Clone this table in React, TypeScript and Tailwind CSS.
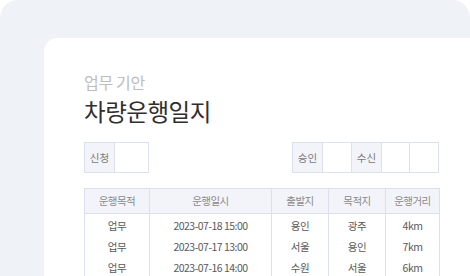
const rows = [
  { purpose: '업무', date: '2023-07-18 15:00', from: '용인', to: '광주', dist: '4km' },
  { purpose: '업무', date: '2023-07-17 13:00', from: '서울', to: '용인', dist: '7km' },
  { purpose: '업무', date: '2023-07-16 14:00', from: '수원', to: '서울', dist: '6km' },
];

function LabelCell({ label }: { label: string }) {
  return (
    <div className="w-[30px] h-full flex items-center justify-center bg-[#f3f4f9] border-r border-[#dcdfee] text-[10.5px] text-[#7a7a7a]">
      {label}
    </div>
  );
}

function App() {
  return (
    <div
      className="w-[470px] h-[276px] overflow-hidden bg-white"
      style={{ fontFamily: '"Noto Sans CJK KR", "Noto Sans", sans-serif' }}
    >
      <div className="h-full rounded-t-[18px] bg-[#eff2f7] pt-[38px] pl-[44px]">
        <div className="h-full w-[460px] rounded-tl-[14px] bg-white pl-[40px] pt-[33px]">
          <div className="text-[16px] leading-[22px] text-[#bdbdbd] tracking-[-0.02em]">업무 기안</div>
          <div className="mt-[3px] text-[23.5px] leading-[30px] text-[#2f2f2f] tracking-[-0.02em]">차량운행일지</div>

          <div className="mt-[16px] flex w-[355px] justify-between">
            <div className="flex h-[31px] border border-[#dcdfee]">
              <LabelCell label="신청" />
              <div className="w-[33px]" />
            </div>
            <div className="flex h-[31px] border border-[#dcdfee]">
              <LabelCell label="승인" />
              <div className="w-[29px] border-r border-[#dcdfee]" />
              <LabelCell label="수신" />
              <div className="w-[28px] border-r border-[#dcdfee]" />
              <div className="w-[28px]" />
            </div>
          </div>

          <table className="mt-[15px] w-[355px] table-fixed border-collapse text-[10.5px] tracking-[-0.05em]">
            <colgroup>
              <col className="w-[65px]" />
              <col className="w-[122px]" />
              <col className="w-[57px]" />
              <col className="w-[57px]" />
              <col className="w-[54px]" />
            </colgroup>
            <thead>
              <tr className="h-[25px] bg-[#f3f4f9] text-[#8a8a8a]">
                {['운행목적', '운행일시', '출발지', '목적지', '운행거리'].map((h) => (
                  <th key={h} className="border border-[#dcdfee] font-normal">
                    {h}
                  </th>
                ))}
              </tr>
            </thead>
            <tbody className="text-[#5a5a5a]">
              {rows.map((r, i) => (
                <tr key={r.date} className={i === 0 ? 'h-[23px] align-bottom' : 'h-[21px] align-bottom'}>
                  {[r.purpose, r.date, r.from, r.to, r.dist].map((v, j) => (
                    <td key={j} className="border-x border-[#dcdfee] text-center pb-[3px]">
                      {v}
                    </td>
                  ))}
                </tr>
              ))}
            </tbody>
          </table>
        </div>
      </div>
    </div>
  );
}

export default App;
